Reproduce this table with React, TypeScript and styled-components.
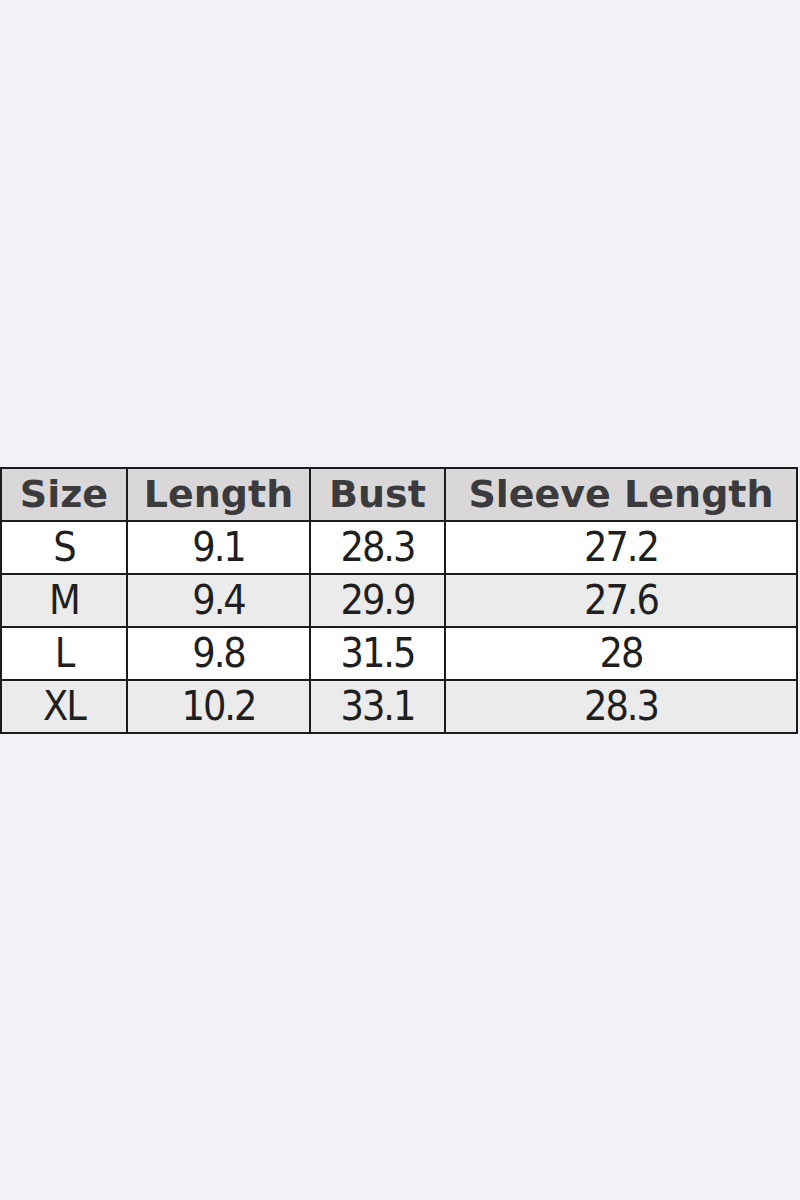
import React from 'react';
import styled, { createGlobalStyle } from 'styled-components';

const GlobalStyle = createGlobalStyle`
  html, body {
    margin: 0;
    padding: 0;
    background: #f1f2f6;
  }
`;

const Page = styled.div`
  width: 800px;
  height: 1200px;
  display: flex;
  align-items: center;
  justify-content: flex-start;
`;

const Table = styled.table`
  width: 798px;
  border-collapse: collapse;
  table-layout: fixed;
  border: 2px solid #1c1c1c;
`;

const HeadCell = styled.th<{ w?: number }>`
  width: ${p => (p.w ? `${p.w}px` : 'auto')};
  height: 51px;
  padding: 0;
  border: 2px solid #1c1c1c;
  background: #d9d7d8;
  color: #3b3b3d;
  font-family: 'DejaVu Sans', sans-serif;
  font-weight: 700;
  font-size: 38px;
  line-height: 1;
  text-align: center;
  vertical-align: middle;
`;

const Row = styled.tr<{ shaded: boolean }>`
  background: ${p => (p.shaded ? '#ebebeb' : '#ffffff')};
`;

const Cell = styled.td`
  height: 51px;
  padding: 0;
  border: 2px solid #1c1c1c;
  color: #1f1f22;
  font-family: 'DejaVu Sans Condensed', sans-serif;
  font-size: 41px;
  letter-spacing: -2px;
  line-height: 1;
  text-align: center;
  vertical-align: middle;
`;

const columns = [
  { label: 'Size', w: 124 },
  { label: 'Length', w: 181 },
  { label: 'Bust', w: 133 },
  { label: 'Sleeve Length' },
];

const rows = [
  ['S', '9.1', '28.3', '27.2'],
  ['M', '9.4', '29.9', '27.6'],
  ['L', '9.8', '31.5', '28'],
  ['XL', '10.2', '33.1', '28.3'],
];

const App: React.FC = () => (
  <>
    <GlobalStyle />
    <Page>
      <Table>
        <thead>
          <tr>
            {columns.map(c => (
              <HeadCell key={c.label} w={c.w}>{c.label}</HeadCell>
            ))}
          </tr>
        </thead>
        <tbody>
          {rows.map((r, i) => (
            <Row key={r[0]} shaded={i % 2 === 1}>
              {r.map((v, j) => (
                <Cell key={j}>{v}</Cell>
              ))}
            </Row>
          ))}
        </tbody>
      </Table>
    </Page>
  </>
);

export default App;
